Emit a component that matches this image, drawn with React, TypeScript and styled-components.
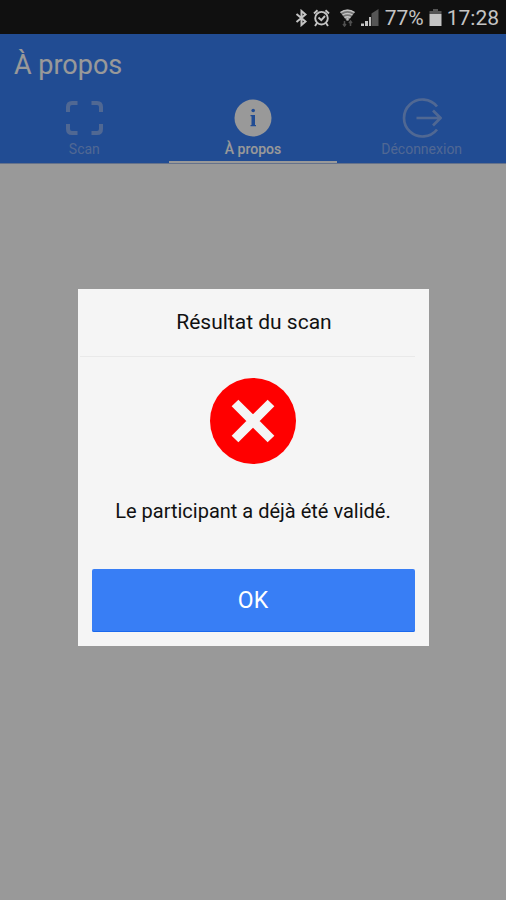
import React from "react";
import styled, { createGlobalStyle } from "styled-components";

const GlobalStyle = createGlobalStyle`
  * { box-sizing: border-box; }
  html, body { margin: 0; padding: 0; }
  body { font-family: Roboto, "Liberation Sans", sans-serif; background: #fff; }
`;

const Screen = styled.div`
  display: flex;
  flex-direction: column;
  min-height: 100vh;
`;

const StatusBar = styled.div`
  display: flex;
  align-items: center;
  justify-content: flex-end;
  height: 34px;
  padding: 2px 7px 0 0;
  background: #101010;
  color: #c4c4c4;
  font-size: 21px;
  line-height: 32px;

  svg { flex: none; }
`;

const StatusIcons = styled.div`
  display: flex;
  align-items: center;
  gap: 5px;
  margin-right: 6px;
`;

const NetworkIcons = styled.div`
  display: flex;
  align-items: center;
  gap: 5px;
  margin-left: 4px;
`;

const StatusText = styled.div`
  display: flex;
  align-items: center;
  gap: 5px;
`;

const Page = styled.div`
  position: relative;
  display: flex;
  flex: 1;
  flex-direction: column;
`;

const Header = styled.header`
  background: #387ff6;
  border-bottom: 1px solid #a9bfe8;
  color: #fff;
`;

const PageTitle = styled.h1`
  margin: 0;
  padding: 15px 14px 0;
  font-size: 27px;
  font-weight: 400;
  line-height: 32px;
`;

const Tabs = styled.nav`
  display: grid;
  grid-template-columns: repeat(3, 1fr);
  padding-top: 15px;
`;

const Tab = styled.button<{ $active?: boolean }>`
  display: flex;
  flex-direction: column;
  align-items: center;
  gap: 1px;
  height: 67px;
  padding: 2px 0 0;
  border: 0;
  border-bottom: 2px solid ${(p) => (p.$active ? "#fff" : "transparent")};
  background: none;
  color: ${(p) => (p.$active ? "#fff" : "#86adf5")};
  font-family: inherit;
  font-size: 14px;
  font-weight: ${(p) => (p.$active ? 500 : 400)};
  line-height: 20px;
`;

const Overlay = styled.div`
  position: absolute;
  inset: 0;
  display: flex;
  align-items: center;
  justify-content: center;
  background: rgba(0, 0, 0, 0.4);
`;

const Dialog = styled.section`
  width: 70%;
  max-width: 351px;
  padding: 0 14px 14px;
  background: #f5f5f5;
  color: #111;
  text-align: center;
`;

const DialogTitle = styled.h2`
  margin: 0 0 0 -12px;
  padding: 18px 0 18px 14px;
  border-bottom: 1px solid #e9e9e9;
  font-size: 21px;
  font-weight: 400;
  line-height: 31px;
`;

const DialogBody = styled.div`
  display: flex;
  flex-direction: column;
  align-items: center;
  padding: 21px 0 44px;
`;

const Message = styled.p`
  margin: 33px 0 0;
  font-size: 20px;
  line-height: 28px;
`;

const OkButton = styled.button`
  display: block;
  width: 100%;
  height: 63px;
  padding: 0;
  border: 0;
  border-radius: 2px;
  background: #387ef5;
  box-shadow: inset 0 -1px 0 #1a69ee;
  color: #fff;
  font-family: inherit;
  font-size: 23px;
  line-height: 63px;
`;

const BluetoothIcon = () => (
  <svg width="13" height="18" viewBox="0 0 13 18" fill="none" stroke="#c4c4c4" strokeWidth="2" aria-hidden="true">
    <path d="M1.5 5 10.5 12.5 6.5 16V2L10.5 5.5 1.5 13" />
  </svg>
);

const AlarmIcon = () => (
  <svg width="17" height="18" viewBox="0 0 17 18" fill="none" stroke="#c4c4c4" strokeWidth="1.9" aria-hidden="true">
    <circle cx="8.5" cy="9.2" r="6.3" />
    <path d="M1 4.5 4.5 1.3M16 4.5 12.5 1.3M4 14 2 17M13 14l2 3M5.5 8.5l2.8 2.7L12 7" />
  </svg>
);

const WifiIcon = () => (
  <svg width="17" height="18" viewBox="0 0 17 18" fill="none" aria-hidden="true">
    <path d="M1 3Q8.5-2 16 3L9.500 11.500h-2Z" fill="#777" />
    <path d="M1.500 3.500Q8.500-1 15.500 3.500M3.500 6Q8.500 3 13.500 6M5.500 8.500Q8.500 7 11.500 8.500" stroke="#c4c4c4" strokeWidth="1.4" />
    <path d="M8.500 8.500v3" stroke="#bbb" strokeWidth="2" />
    <path d="M5.500 12v5M4 15l1.500 2L7 15M11.500 17v-5M10 14l1.500-2 1.500 2" stroke="#505050" strokeWidth="1.5" />
  </svg>
);

const SignalIcon = () => (
  <svg width="18" height="18" viewBox="0 0 18 18" aria-hidden="true">
    <path d="M0 14.500h3V17H0zM4 12h3v5H4z" fill="#c4c4c4" />
    <path d="M8 8h2v9H8z" fill="#bbb" />
    <path d="M10.500 4.500 17.500 0v17h-7z" fill="#555" />
  </svg>
);

const BatteryIcon = () => (
  <svg width="13" height="18" viewBox="0 0 13 18" aria-hidden="true">
    <path d="M4 0h5v2h3.500v3H.5V2H4z" fill="#555" />
    <path d="M.5 5h12v12H.5z" fill="#c4c4c4" />
  </svg>
);

const ScanIcon = () => (
  <svg width="40" height="40" viewBox="0 0 40 40" fill="none" stroke="currentColor" strokeWidth="4" aria-hidden="true">
    <path d="M4 14V9q0-4 4-4H13.500M27.500 5h5.500q4 0 4 4v5M37 26v5q0 4-4 4h-5.500M13.500 35H8q-4 0-4-4v-5" />
  </svg>
);

const InfoIcon = () => (
  <svg width="40" height="40" viewBox="0 0 40 40" aria-hidden="true">
    <circle cx="20" cy="20" r="18.500" fill="currentColor" />
    <circle cx="20.200" cy="12.500" r="1.800" fill="#387ff6" />
    <path d="M17.500 17h4.500v10h1v1.300h-5.500V27h1v-8.700h-1z" fill="#387ff6" />
  </svg>
);

const LogoutIcon = () => (
  <svg width="40" height="40" viewBox="0 0 40 40" fill="none" stroke="currentColor" strokeWidth="2.700" aria-hidden="true">
    <path d="M35 8.500A18.500 18.500 0 1 0 35 31.500M14.500 20H38M31 12.500l7.500 7.500-7.500 7.500" />
  </svg>
);

const ErrorIcon = () => (
  <svg width="86" height="86" viewBox="0 0 86 86" role="img" aria-label="Erreur">
    <circle cx="43" cy="43" r="43" fill="#f00" />
    <path
      d="M25 25 61 61M61 25 25 61"
      stroke="#f5f5f5"
      strokeWidth="9.500"
    />
  </svg>
);

export default function App() {
  return (
    <Screen>
      <GlobalStyle />
      <StatusBar>
        <StatusIcons>
          <BluetoothIcon />
          <AlarmIcon />
          <NetworkIcons>
            <WifiIcon />
            <SignalIcon />
          </NetworkIcons>
        </StatusIcons>
        <StatusText>
          <span>77%</span>
          <BatteryIcon />
          <time>17:28</time>
        </StatusText>
      </StatusBar>
      <Page>
        <Header>
          <PageTitle>À propos</PageTitle>
          <Tabs>
            <Tab type="button">
              <ScanIcon />
              Scan
            </Tab>
            <Tab type="button" $active aria-current="page">
              <InfoIcon />
              À propos
            </Tab>
            <Tab type="button">
              <LogoutIcon />
              Déconnexion
            </Tab>
          </Tabs>
        </Header>
        <Overlay>
          <Dialog role="dialog" aria-modal="true" aria-labelledby="dialog-title">
            <DialogTitle id="dialog-title">Résultat du scan</DialogTitle>
            <DialogBody>
              <ErrorIcon />
              <Message>Le participant a déjà été validé.</Message>
            </DialogBody>
            <OkButton type="button">OK</OkButton>
          </Dialog>
        </Overlay>
      </Page>
    </Screen>
  );
}
